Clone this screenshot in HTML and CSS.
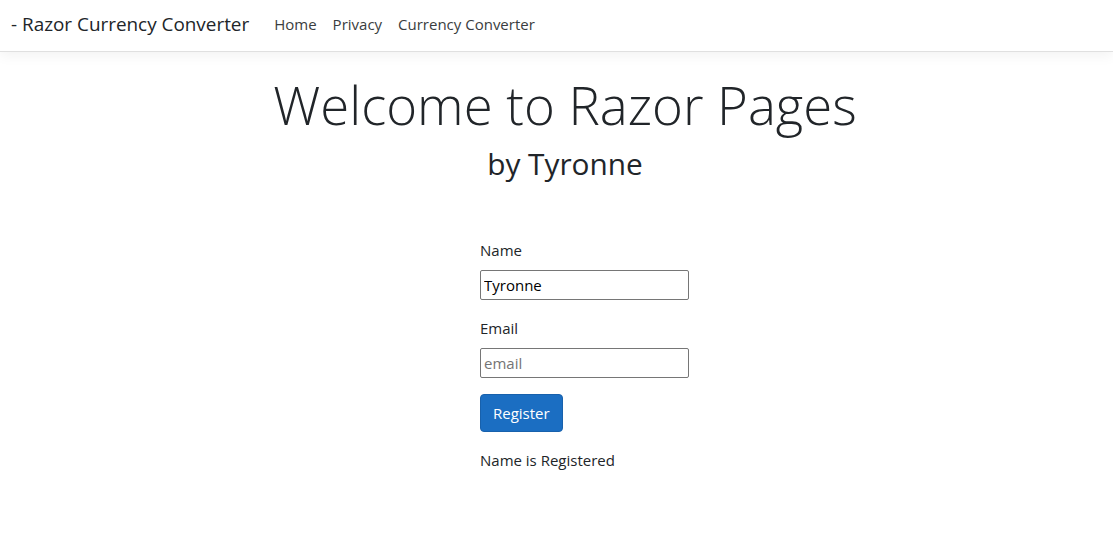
FILE: index.html
```html
<!DOCTYPE html>
<html lang="en">
<head>
<meta charset="utf-8">
<title>Razor Currency Converter</title>
<link rel="stylesheet" href="styles.css">
</head>
<body>
<header class="navbar">
  <a class="brand" href="#">- Razor Currency Converter</a>
  <nav class="nav">
    <a class="nav-link" href="#">Home</a>
    <a class="nav-link" href="#">Privacy</a>
    <a class="nav-link" href="#">Currency Converter</a>
  </nav>
</header>
<main class="main">
  <div class="hero">
    <h1 class="display">Welcome to Razor Pages</h1>
    <h2 class="sub">by Tyronne</h2>
  </div>
  <form class="form">
    <div class="field">
      <label class="label" for="name">Name</label>
      <input class="input" id="name" type="text" value="Tyronne">
    </div>
    <div class="field">
      <label class="label" for="email">Email</label>
      <input class="input" id="email" type="text" placeholder="email">
    </div>
    <button class="btn" type="button">Register</button>
    <p class="msg">Name is Registered</p>
  </form>
</main>
</body>
</html>
```
FILE: styles.css
```css
* { box-sizing: border-box; }
html, body { margin: 0; padding: 0; }
body {
  font-family: "Open Sans", "Noto Sans", "Liberation Sans", sans-serif;
  color: #212529;
  background: #fff;
  font-size: 15px;
}
.navbar {
  display: flex;
  align-items: center;
  height: 52px;
  padding: 0 0 3px 11px;
  border-bottom: 1px solid #e0e0e0;
  box-shadow: 0 4px 12px rgba(0,0,0,0.05);
}
.brand {
  font-size: 18.9px;
  color: #212529;
  text-decoration: none;
  margin-right: 17px;
}
.nav { display: flex; gap: 16px; padding-left: 8px; }
.nav-link {
  color: #3a3d40;
  text-decoration: none;
  font-size: 15px;
}
.main { display: flex; flex-direction: column; }
.hero { text-align: center; padding-left: 17px; }
.display {
  font-size: 52.7px;
  font-weight: 300;
  line-height: 1.2;
  margin: 21px 0 0;
}
.sub {
  font-size: 29.8px;
  font-weight: 400;
  line-height: 1.2;
  margin: 10px 0 0;
}
.form { padding-left: 480px; margin-top: 56px; }
.field { display: flex; flex-direction: column; align-items: flex-start; margin-bottom: 16px; }
.label { font-size: 15px; line-height: 24px; margin-bottom: 8px; }
.input {
  width: 209px;
  height: 30px;
  border: 1px solid #767676;
  border-radius: 2px;
  font: inherit;
  font-size: 15px;
  padding: 1px 3px;
  color: #000;
}
.input::placeholder { color: #757575; }
.btn {
  font: inherit;
  font-size: 15px;
  color: #fff;
  background: #1b6ec2;
  border: 1px solid #1861ac;
  border-radius: 4px;
  padding: 6px 12px;
  height: 38px;
}
.msg { margin: 16px 0 0; line-height: 24px; }
```
